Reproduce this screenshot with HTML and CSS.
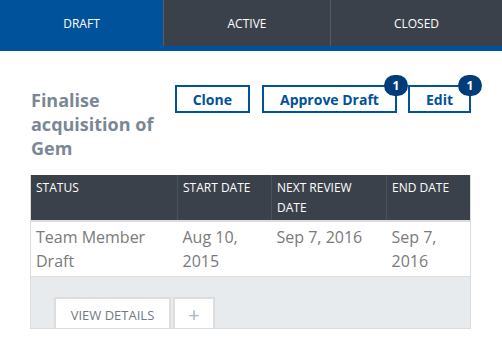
FILE: index.html
```html
<!DOCTYPE html>
<html lang="en">
<head>
  <meta charset="UTF-8" />
  <title>Finalise acquisition of Gem</title>
  <link rel="stylesheet" href="styles.css">
</head>
<body>

  <nav class="tabs">
    <div class="tab active">DRAFT</div>
    <div class="tab">ACTIVE</div>
    <div class="tab">CLOSED</div>
  </nav>

  <div class="content">
    <div class="head">
      <h2 class="title">Finalise acquisition of Gem</h2>
      <div class="actions">
        <button class="btn">Clone</button>
        <button class="btn">Approve Draft<span class="badge">1</span></button>
        <button class="btn">Edit<span class="badge">1</span></button>
      </div>
    </div>

    <table class="grid">
      <thead>
        <tr>
          <th class="c1">STATUS</th>
          <th class="c2">START DATE</th>
          <th class="c3">NEXT REVIEW DATE</th>
          <th class="c4">END DATE</th>
        </tr>
      </thead>
      <tbody>
        <tr>
          <td>Team Member Draft</td>
          <td>Aug 10, 2015</td>
          <td>Sep 7, 2016</td>
          <td>Sep 7, 2016</td>
        </tr>
      </tbody>
    </table>

    <div class="row-foot">
      <button class="foot-btn">VIEW DETAILS</button>
      <button class="foot-btn plus">+</button>
    </div>
  </div>

</body>
</html>
```

FILE: styles.css
```css
body {
  margin: 0;
  font-family: 'Open Sans', sans-serif;
  background: #fff;
}

.tabs {
  display: flex;
  height: 46px;
  background: #3b414b;
  border-bottom: 5px solid #00529b;
}

.tab {
  display: flex;
  align-items: center;
  justify-content: center;
  color: #fff;
  font-size: 12px;
  border-left: 1px solid #565c66;
}

.tab:nth-child(1) { width: 163px; border-left: none; }
.tab:nth-child(2) { width: 166px; }
.tab:nth-child(3) { flex: 1; }

.tab.active {
  background: #00529b;
}

.content {
  padding: 0 31px 0 30px;
}

.head {
  display: flex;
  align-items: flex-start;
  margin-top: 34px;
}

.title {
  flex: 1;
  margin: 3px 0 0 1px;
  font-size: 18px;
  line-height: 24px;
  font-weight: bold;
  color: #7b8794;
  max-width: 135px;
}

.actions {
  display: flex;
  margin-left: auto;
  gap: 11px;
}

.btn {
  position: relative;
  height: 28px;
  padding: 0 16px;
  background: #fff;
  border: 2px solid #00529b;
  color: #00529b;
  font-family: 'Open Sans', sans-serif;
  font-size: 14px;
  font-weight: bold;
}

.btn:first-child {
  margin-right: 1px;
}

.badge {
  position: absolute;
  top: -12px;
  right: -13px;
  width: 24px;
  height: 21px;
  border-radius: 11px;
  background: #003d78;
  color: #fff;
  font-size: 12px;
  line-height: 21px;
  text-align: center;
}

.grid {
  width: 100%;
  margin-top: 15px;
  border-collapse: collapse;
  border-left: 1px solid #ddd;
  border-right: 1px solid #ddd;
}

.grid th {
  background: #3b414b;
  color: #fff;
  font-size: 12px;
  font-weight: normal;
  line-height: 20px;
  text-align: left;
  vertical-align: top;
  padding: 3px 5px 2px;
  border-left: 1px solid #4c525c;
  border-bottom: 2px solid #dcdcdc;
}

.grid th.c1 { width: 136px; border-left: none; }
.grid th.c2 { width: 83px; }
.grid th.c3 { width: 104px; }

.grid td {
  font-size: 16px;
  line-height: 24px;
  color: #7a7a7a;
  vertical-align: top;
  padding: 3px 5px 3px;
  border-bottom: 1px solid #ddd;
}

.row-foot {
  display: flex;
  align-items: flex-end;
  gap: 2px;
  height: 51px;
  padding-left: 23px;
  background: #e8ebee;
  border: 1px solid #ddd;
  border-top: none;
}

.foot-btn {
  height: 31px;
  background: #fff;
  border: 2px solid #ddd;
  border-bottom: none;
  color: #6f7a85;
  font-family: 'Open Sans', sans-serif;
  font-size: 13px;
  padding: 2px 0 0;
  width: 117px;
}

.foot-btn.plus {
  width: 42px;
  font-size: 20px;
  color: #a9b6bf;
  line-height: 1;
}
```
